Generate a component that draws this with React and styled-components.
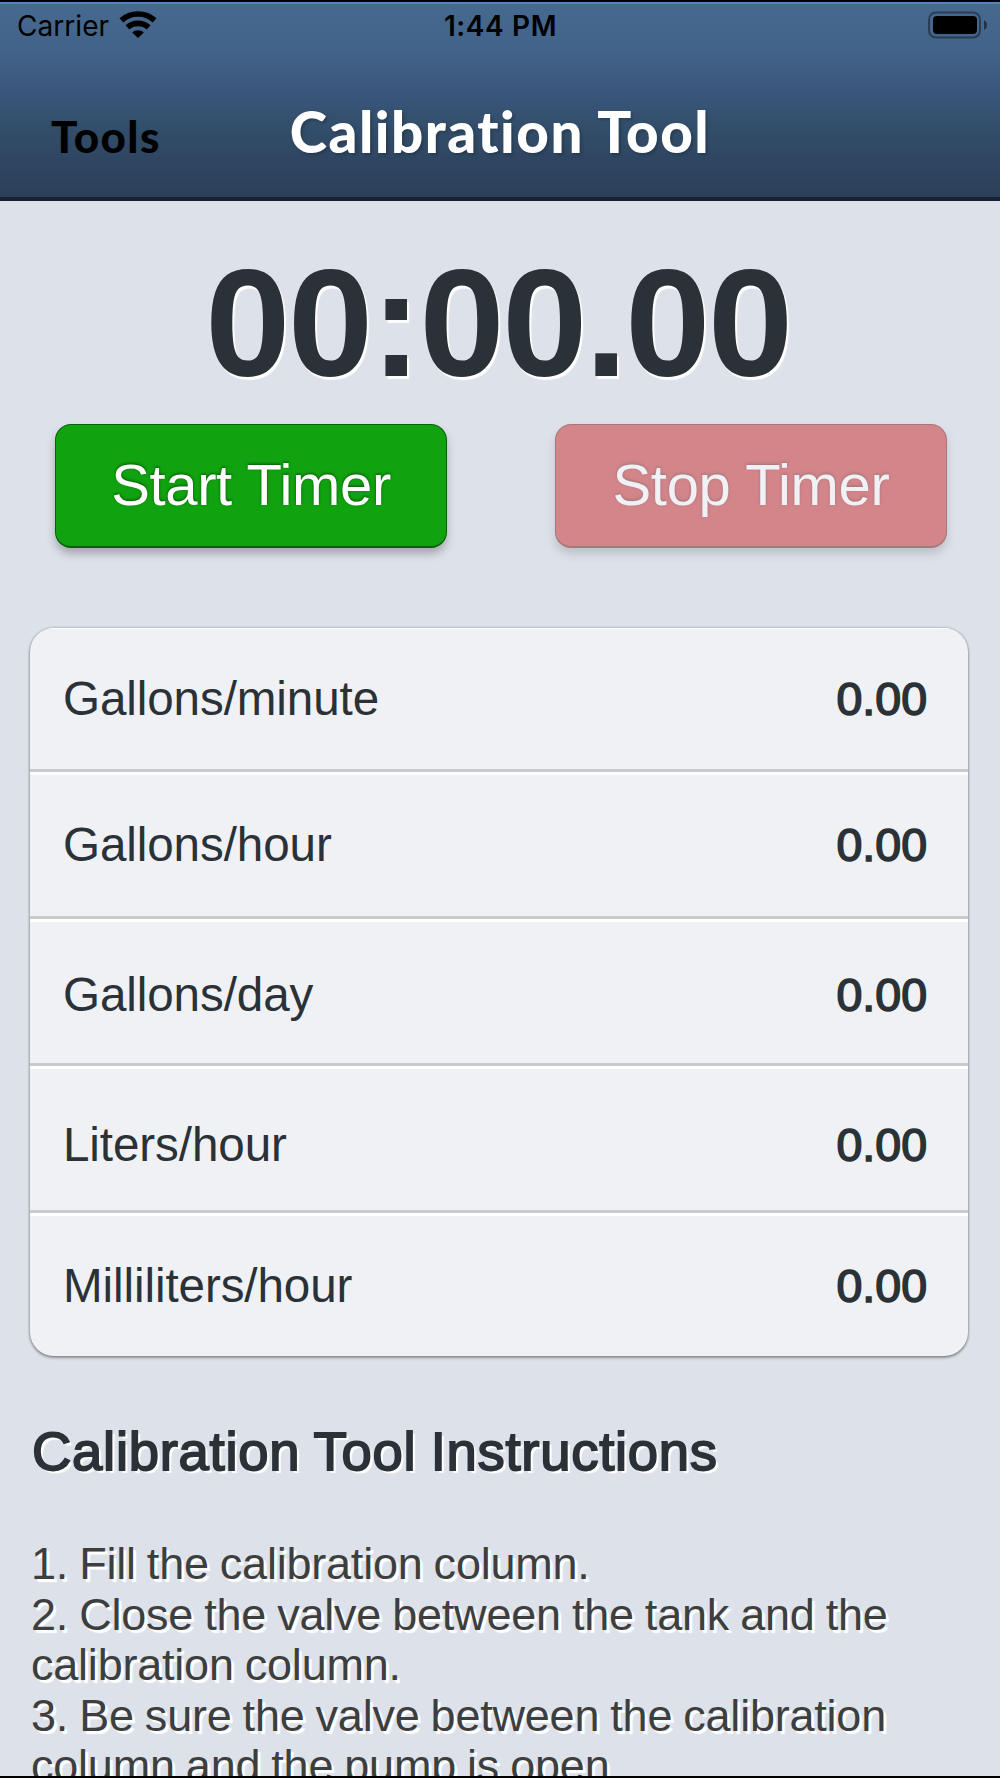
import styled, { createGlobalStyle } from "styled-components";

const rates = [
  { label: "Gallons/minute", value: "0.00", shift: 0 },
  { label: "Gallons/hour", value: "0.00", shift: 0 },
  { label: "Gallons/day", value: "0.00", shift: 6 },
  { label: "Liters/hour", value: "0.00", shift: 12 },
  { label: "Milliliters/hour", value: "0.00", shift: 0 },
];

const WifiIcon = () => (
  <svg width="38" height="28" viewBox="0 0 38 28" fill="none" stroke="#000">
    <path d="M2.4 9.4 C11.5 0.9 26.5 0.9 35.6 9.4" strokeWidth="5.6" />
    <path d="M8.4 16.4 C14.3 11 23.7 11 29.6 16.4" strokeWidth="5.6" />
    <path d="M19 27 L13.2 21.4 C16.5 18.5 21.5 18.5 24.8 21.4 Z" fill="#000" stroke="none" />
  </svg>
);

const BatteryIcon = () => (
  <svg width="60" height="28" viewBox="0 0 60 28">
    <rect x="1" y="1.5" width="51" height="25" rx="7" fill="none" stroke="#000" strokeOpacity="0.4" strokeWidth="2" />
    <rect x="5" y="5" width="44" height="18" rx="4" fill="#000" />
    <path d="M56 9 C60 11 60 17 56 19 Z" fill="#000" fillOpacity="0.5" />
  </svg>
);

const App = () => {
  return (
    <>
      <GlobalStyle />
      <Screen>
        <Header>
          <StatusBar>
            <Carrier>
              Carrier
              <WifiIcon />
            </Carrier>
            <Clock>1:44 PM</Clock>
            <Battery>
              <BatteryIcon />
            </Battery>
          </StatusBar>
          <NavBar>
            <BackLink>Tools</BackLink>
            <Title>Calibration Tool</Title>
          </NavBar>
        </Header>

        <Timer>00:00.00</Timer>

        <ButtonRow>
          <TimerButton $color="#10a30f">Start Timer</TimerButton>
          <TimerButton $color="#cb3a3c" disabled>
            Stop Timer
          </TimerButton>
        </ButtonRow>

        <RateList>
          {rates.map((rate) => (
            <RateRow key={rate.label} $shift={rate.shift}>
              <RateLabel>{rate.label}</RateLabel>
              <RateValue>{rate.value}</RateValue>
            </RateRow>
          ))}
        </RateList>

        <Heading>Calibration Tool Instructions</Heading>
        <Steps>
          <Step>1. Fill the calibration column.</Step>
          <Step>
            2. Close the valve between the tank and the calibration column.
          </Step>
          <Step>
            3. Be sure the valve between the calibration column and the pump is
            open.
          </Step>
        </Steps>
      </Screen>
    </>
  );
};

export default App;

const GlobalStyle = createGlobalStyle`
  body {
    margin: 0;
    background-color: #dde1e9;
  }
`;

const Screen = styled.div`
  display: flex;
  flex-direction: column;
  width: 1000px;
  height: 1778px;
  box-sizing: border-box;
  overflow: hidden;
  border-top: 2px solid #000000;
  border-bottom: 2px solid #000000;
  background-color: #dde1e9;
  color: #2b3237;
  font-family: "Liberation Sans", Arial, sans-serif;
`;

const Header = styled.div`
  flex: none;
  height: 199px;
  box-sizing: border-box;
  border-top: 2px solid #5584bb;
  border-bottom: 4px solid #17212f;
  background: linear-gradient(
    #46698f 0%,
    #426389 25%,
    #39557b 47%,
    #334f6b 62%,
    #2f4662 80%,
    #2c3f58 100%
  );
`;

const StatusBar = styled.div`
  display: grid;
  grid-template-columns: 1fr auto 1fr;
  align-items: center;
  height: 42px;
  padding: 0 12px 0 17px;
  color: #000000;
  font-family: Inter, sans-serif;
  font-size: 28px;
  line-height: 44px;
`;

const Carrier = styled.div`
  display: flex;
  align-items: center;
  gap: 10px;
  letter-spacing: 0.05px;

  svg {
    margin-top: -2px;
  }
`;

const Clock = styled.div`
  margin-left: -4px;
  font-weight: 600;
  letter-spacing: 0.6px;
`;

const Battery = styled.div`
  display: flex;
  justify-content: flex-end;

  svg {
    margin-top: -2px;
  }
`;

const NavBar = styled.div`
  display: grid;
  grid-template-columns: 1fr auto 1fr;
  align-items: baseline;
  padding: 50px 0 0;
  font-family: Lato, sans-serif;
  font-weight: 900;
  line-height: 70px;
`;

const BackLink = styled.div`
  padding-left: 51px;
  color: #000000;
  font-size: 44px;
  letter-spacing: 1.4px;
`;

const Title = styled.div`
  color: #ffffff;
  font-size: 56.5px;
  letter-spacing: 1.5px;
  text-shadow: 2px 2px 3px rgba(0, 0, 0, 0.2);
`;

const Timer = styled.div`
  flex: none;
  height: 223px;
  font-size: 153px;
  font-weight: 700;
  line-height: 243px;
  letter-spacing: -2.3px;
  text-indent: -4px;
  text-align: center;
  text-shadow: 2px 3px 1px #ffffff;
`;

const ButtonRow = styled.div`
  display: flex;
  flex: none;
  justify-content: space-between;
  padding: 0 53px 0 55px;
`;

const TimerButton = styled.button`
  width: 392px;
  height: 124px;
  padding: 0 0 2px;
  border: 1px solid rgba(0, 0, 0, 0.4);
  border-bottom-width: 2px;
  border-radius: 16px;
  background-color: ${({ $color }) => $color};
  box-shadow: 0 6px 8px rgba(0, 0, 0, 0.25);
  color: #ffffff;
  font-family: inherit;
  font-size: 58px;
  letter-spacing: -0.35px;
  text-shadow: 0 -1px 3px rgba(0, 0, 0, 0.5);

  &:disabled {
    opacity: 0.55;
  }
`;

const RateList = styled.div`
  flex: none;
  width: 938px;
  height: 728px;
  margin: 80px 0 0 30px;
  border-radius: 24px;
  background-color: #f0f1f4;
  box-shadow: 0 0 2px 1px rgba(0, 0, 0, 0.16), 0 2px 3px rgba(0, 0, 0, 0.32);
  overflow: hidden;
`;

const RateRow = styled.div`
  display: flex;
  justify-content: space-between;
  height: 147px;
  box-sizing: border-box;
  padding: ${({ $shift }) => $shift / 2}px 41px 0 33px;
  border-top: 3px solid #ffffff;
  border-bottom: 3px solid #c9cacc;
  font-size: 47.6px;
  line-height: 140px;

  &:first-child {
    height: 144px;
    border-top-width: 1px;
  }

  &:last-child {
    border-bottom: 0;
  }
`;

const RateLabel = styled.div`
  letter-spacing: -0.1px;
`;

const RateValue = styled.div`
  font-size: 46.5px;
  -webkit-text-stroke: 1.6px #2b3237;
`;

const Heading = styled.div`
  flex: none;
  margin: 61px 0 0 32px;
  font-size: 54.5px;
  line-height: 70px;
  letter-spacing: 0.7px;
  word-spacing: -1.5px;
  -webkit-text-stroke: 1.8px #2b3237;
  text-shadow: 3px 3px 1px #ffffff;
`;

const Steps = styled.div`
  width: 900px;
  margin: 52px 0 0 31px;
  color: #3d3e3e;
  font-size: 45px;
  line-height: 50.5px;
  letter-spacing: -0.22px;
  word-spacing: -1.2px;
  text-shadow: 3px 3px 1px #ffffff;
`;

const Step = styled.div``;
